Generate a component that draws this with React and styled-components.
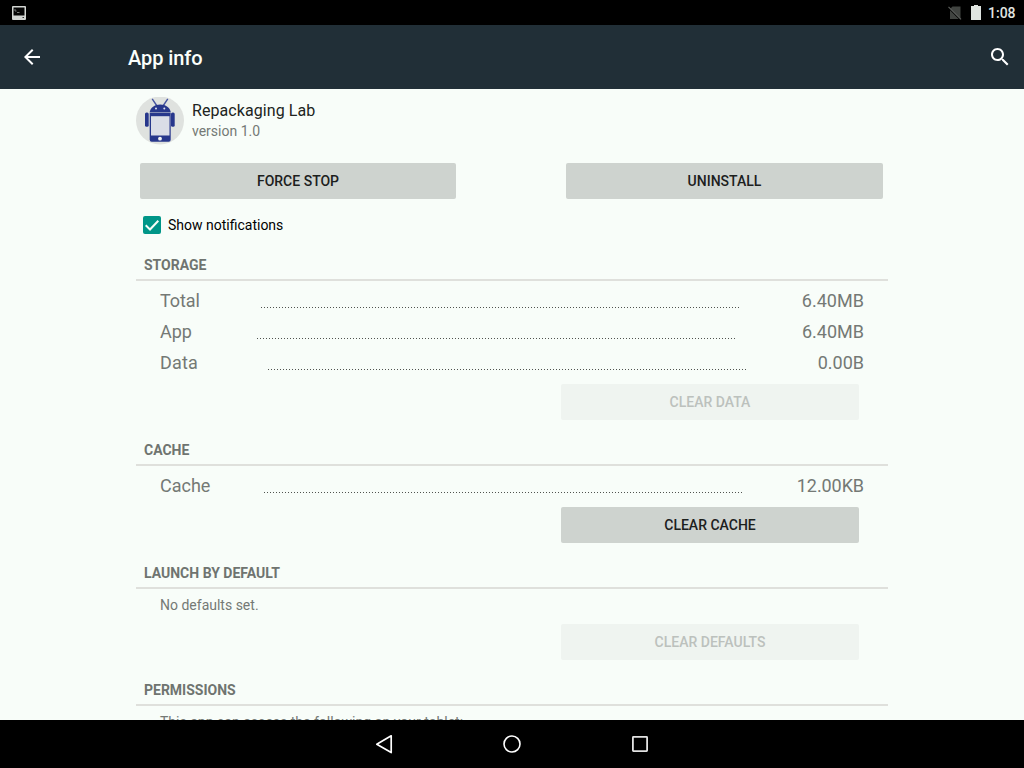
import React from 'react';
import styled, { createGlobalStyle } from 'styled-components';

const GlobalStyle = createGlobalStyle`
  * { box-sizing: border-box; }
  body { margin: 0; background: #f8fdf9; font-family: Roboto, "Liberation Sans", sans-serif; }
  svg { display: block; flex: none; }
`;

const Screen = styled.div`
  width: 1024px;
  height: 768px;
  display: flex;
  flex-direction: column;
  overflow: hidden;
  background: #f8fdf9;
`;

const StatusBar = styled.div`
  flex: none;
  height: 25px;
  padding: 0 8px 0 12px;
  display: flex;
  align-items: center;
  background: #000;
`;

const StatusIcons = styled.div`
  margin-left: auto;
  display: flex;
  align-items: center;
`;

const Battery = styled.svg`
  margin-left: 9px;
`;

const Clock = styled.span`
  width: 28px;
  margin-left: 7px;
  font-size: 14px;
  line-height: 16px;
  font-weight: 500;
  color: #e2e6e2;
  white-space: nowrap;
  padding-top: 1px;
`;

const Toolbar = styled.header`
  flex: none;
  height: 64px;
  padding: 0 12px 0 20px;
  display: flex;
  align-items: center;
  background: #212f37;
`;

const Title = styled.h1`
  margin: 2px 0 0 84px;
  flex: 1;
  font-size: 20px;
  line-height: 24px;
  font-weight: 500;
  letter-spacing: -0.1px;
  color: #fbfffb;
`;

const Content = styled.main`
  flex: 1;
  min-height: 0;
  overflow: hidden;
  padding: 0 136px;
`;

const AppHeader = styled.div`
  height: 70px;
  padding-top: 8px;
  display: flex;
  gap: 8px;
`;

const AppName = styled.div`
  margin-top: 4px;
  font-size: 16px;
  line-height: 20px;
  letter-spacing: 0.07px;
  color: #202421;
`;

const Version = styled.div`
  font-size: 14px;
  line-height: 20px;
  color: #747975;
`;

const Actions = styled.div`
  display: flex;
  justify-content: space-between;
  padding: 4px 5px 0 4px;
`;

const Button = styled.button`
  display: block;
  width: ${(p) => p.$width || 298}px;
  height: 36px;
  padding: 0;
  border: 0;
  border-radius: 2px;
  background: ${(p) => (p.disabled ? '#eff4f0' : '#ced3cf')};
  color: ${(p) => (p.disabled ? '#bcc1bd' : '#1c201d')};
  font: 500 14px/20px Roboto, "Liberation Sans", sans-serif;
`;

const CheckRow = styled.label`
  height: 20px;
  margin-top: 16px;
  padding-left: 7px;
  display: flex;
  align-items: center;
  gap: 7px;
  font-size: 14px;
  line-height: 20px;
  color: #000;
`;

const SectionTitle = styled.h2`
  margin: 0;
  height: 46px;
  padding: 20px 8px 4px;
  border-bottom: 2px solid #dfe0dc;
  font-size: 14px;
  line-height: 20px;
  font-weight: 700;
  color: #6f7470;
`;

const Rows = styled.div`
  padding: 4px 24px 0;
`;

const Row = styled.div`
  height: 31px;
  display: flex;
  justify-content: space-between;
  align-items: center;
  font-size: 18px;
  line-height: 24px;
  color: #747975;
`;

const Label = styled.span`
  letter-spacing: ${(p) => p.$track || 0}px;
`;

const Leader = styled.div`
  width: 479px;
  height: 1px;
  margin-top: 14px;
  background: repeating-linear-gradient(to right, #50534f 0 1px, transparent 1px 3px);
`;

const ButtonSlot = styled.div`
  display: flex;
  justify-content: flex-end;
  padding: 6px 29px 0 0;
`;

const Note = styled.p`
  margin: 0;
  height: 29px;
  padding: 6px 24px 0;
  font-size: 14px;
  line-height: 20px;
  white-space: nowrap;
  color: #747975;
`;

const NavBar = styled.nav`
  flex: none;
  height: 48px;
  display: flex;
  justify-content: center;
  align-items: center;
  gap: 104px;
  background: #000;
`;

function DataRow({ label, value, labelTrack, valueTrack }) {
  return (
    <Row>
      <Label $track={labelTrack}>{label}</Label>
      <Leader />
      <Label $track={valueTrack}>{value}</Label>
    </Row>
  );
}

function AppIcon() {
  return (
    <svg width="48" height="48" viewBox="0 0 48 48">
      <circle cx="24" cy="23.5" r="24" fill="#dfe2df" />
      <g fill="#27378c">
        <path d="M16.2 1.800 21 9M31.800 1.800 27 9" stroke="#4554a0" strokeWidth="1.4" />
        <path d="M13.700 15C14.400 10.700 18.500 7.500 24.200 7.500S34 10.700 34.700 15z" />
        <rect x="9" y="15.500" width="3.700" height="14.300" rx="1.600" />
        <rect x="35" y="15.500" width="3.700" height="14.300" rx="1.600" />
        <path d="M13.700 15.600h21V42.700a2 2 0 0 1-2 2h-17a2 2 0 0 1-2-2z" />
      </g>
      <path d="M15 19.200h18.500v19.300H15z" fill="#dadde7" />
      <circle cx="20" cy="11.500" r="1" fill="#dfe2ee" />
      <circle cx="28.300" cy="11.500" r="1" fill="#dfe2ee" />
      <circle cx="24" cy="41.700" r="1.900" fill="#f2f4f4" />
    </svg>
  );
}

export default function App() {
  return (
    <Screen>
      <GlobalStyle />
      <StatusBar>
        <svg width="14" height="14" viewBox="0 0 14 14">
          <rect width="14" height="14" rx="1" fill="#d3d6d3" />
          <rect x="1.500" y="1.500" width="11" height="8" fill="#050505" />
          <path d="M3 3v2h1.500M5 6.500h2.500" fill="none" stroke="#777b78" />
          <path d="M10.500 11.500h1.500" stroke="#333" />
        </svg>
        <StatusIcons>
          <svg width="14" height="14" viewBox="0 0 14 14">
            <path d="M4.500 .500H12.500V13H2V3z" fill="#414441" />
            <path d="M.500 1.900 12.300 13.700" stroke="#000" strokeWidth="1.300" />
            <path d="M.500.800 13 13.300" stroke="#5b5e5b" strokeWidth="1.200" />
          </svg>
          <Battery width="10" height="16" viewBox="0 0 10 16">
            <path d="M3 0h4v1h3v14H0V1h3z" fill="#dfe4e0" />
          </Battery>
          <Clock>1:08</Clock>
        </StatusIcons>
      </StatusBar>
      <Toolbar>
        <svg width="24" height="24" viewBox="0 0 24 24">
          <path d="M20 11H7.830l5.590-5.590L12 4l-8 8 8 8 1.410-1.410L7.830 13H20v-2z" fill="#fff" />
        </svg>
        <Title>App info</Title>
        <svg width="24" height="24" viewBox="0 0 24 24">
          <path
            d="M15.500 14h-.790l-.280-.270C15.410 12.590 16 11.110 16 9.500 16 5.910 13.090 3 9.500 3S3 5.910 3 9.500 5.910 16 9.500 16c1.610 0 3.090-.590 4.230-1.570l.270.280v.790l5 4.990L20.490 19l-4.990-5zm-6 0C7.010 14 5 11.990 5 9.500S7.010 5 9.500 5 14 7.010 14 9.500 11.990 14 9.500 14z"
            fill="#fff"
          />
        </svg>
      </Toolbar>
      <Content>
        <AppHeader>
          <AppIcon />
          <div>
            <AppName>Repackaging Lab</AppName>
            <Version>version 1.0</Version>
          </div>
        </AppHeader>
        <Actions>
          <Button $width={316}>FORCE STOP</Button>
          <Button $width={317}>UNINSTALL</Button>
        </Actions>
        <CheckRow>
          <svg width="18" height="18" viewBox="0 0 18 18">
            <rect width="18" height="18" rx="2" fill="#009688" />
            <path d="m2.700 9.300 4.300 4.200 8.300-8.700" fill="none" stroke="#f7fdf8" strokeWidth="2" />
          </svg>
          Show notifications
        </CheckRow>
        <SectionTitle>STORAGE</SectionTitle>
        <Rows>
          <DataRow label="Total" value="6.40MB" labelTrack={-0.1} valueTrack={0.03} />
          <DataRow label="App" value="6.40MB" />
          <DataRow label="Data" value="0.00B" labelTrack={0.15} />
        </Rows>
        <ButtonSlot><Button disabled>CLEAR DATA</Button></ButtonSlot>
        <SectionTitle>CACHE</SectionTitle>
        <Rows>
          <DataRow label="Cache" value="12.00KB" valueTrack={-0.08} />
        </Rows>
        <ButtonSlot><Button>CLEAR CACHE</Button></ButtonSlot>
        <SectionTitle>LAUNCH BY DEFAULT</SectionTitle>
        <Note>No defaults set.</Note>
        <ButtonSlot><Button disabled>CLEAR DEFAULTS</Button></ButtonSlot>
        <SectionTitle>PERMISSIONS</SectionTitle>
        <Note>This app can access the following on your tablet:</Note>
      </Content>
      <NavBar>
        <svg width="24" height="24" viewBox="0 0 24 24">
          <path d="M19.200 3.800v16.800L4.800 12.200z" fill="none" stroke="#fff" strokeWidth="1.700" strokeLinejoin="round" />
        </svg>
        <svg width="24" height="24" viewBox="0 0 24 24">
          <circle cx="12" cy="12" r="8" fill="none" stroke="#fff" strokeWidth="1.600" />
        </svg>
        <svg width="24" height="24" viewBox="0 0 24 24">
          <rect x="4.900" y="4.900" width="14.200" height="14.200" rx=".5" fill="none" stroke="#e3e3e3" strokeWidth="1.800" />
        </svg>
      </NavBar>
    </Screen>
  );
}
